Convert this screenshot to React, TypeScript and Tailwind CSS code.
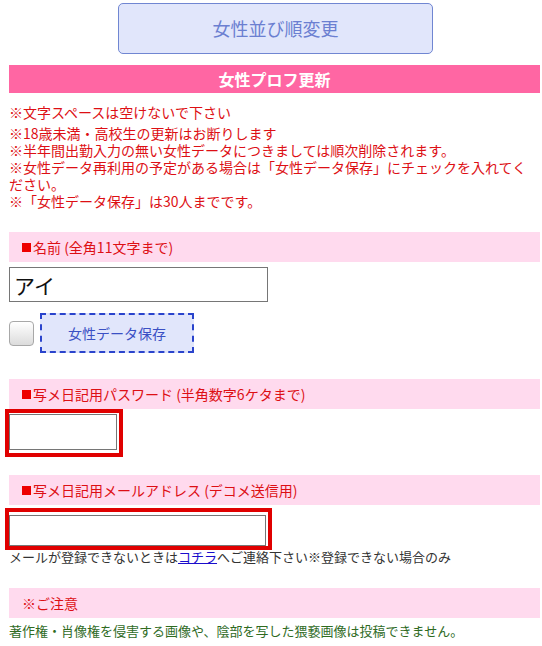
import { useState } from "react";

const jp = { fontFamily: '"Noto Sans CJK JP", "Liberation Sans", sans-serif' };

function SectionBar({ children, mark = true }: { children: React.ReactNode; mark?: boolean }) {
  return (
    <div className="flex h-[30px] items-center bg-[#ffdaee] pl-[13px] text-[14px] leading-none text-[#dd0f14]">
      {mark && <span className="mr-[2px] inline-block h-[9px] w-[9px] bg-[#ee0000]" />}
      {children}
    </div>
  );
}

export default function App() {
  const [name, setName] = useState("アイ");
  const [keep, setKeep] = useState(false);

  return (
    <div className="min-h-[646px] w-[542px] bg-white pb-[12px] pl-[9px] pr-[2px]" style={jp}>
      {/* sort order button */}
      <div className="flex justify-center pt-[3px] pl-[2px]">
        <button className="h-[51px] w-[315px] rounded-[5px] border border-[#7086d2] bg-[#e1e6fb] text-[18px] text-[#6b7fd1]">
          女性並び順変更
        </button>
      </div>

      {/* title */}
      <div className="mt-[11px] flex h-[28px] items-center justify-center bg-[#ff66a3] text-[16px] font-bold text-white">
        女性プロフ更新
      </div>

      {/* notes */}
      <p className="mt-[11px] text-[14px] leading-[17px] text-[#dd0f14]">※文字スペースは空けないで下さい</p>
      <div className="mt-[4px] text-[14px] leading-[17px] text-[#dd0f14]">
        <p>※18歳未満・高校生の更新はお断りします</p>
        <p>※半年間出勤入力の無い女性データにつきましては順次削除されます。</p>
        <p>※女性データ再利用の予定がある場合は「女性データ保存」にチェックを入れてください。</p>
        <p>※「女性データ保存」は30人までです。</p>
      </div>

      {/* name */}
      <div className="mt-[22px]">
        <SectionBar>名前 (全角11文字まで)</SectionBar>
      </div>
      <input
        value={name}
        onChange={(e) => setName(e.target.value)}
        className="mt-[5px] block h-[35px] w-[259px] border border-[#767676] px-[4px] text-[21px] text-[#111] outline-none"
        style={jp}
      />
      <div className="mt-[11px] flex items-center gap-[6px]">
        <button
          onClick={() => setKeep(!keep)}
          className="h-[25px] w-[25px] rounded-[4px] border border-[#a8a8a8] bg-gradient-to-b from-white to-[#dcdcdc]"
        >
          {keep && <span className="text-[14px] text-[#333]">✓</span>}
        </button>
        <div className="flex h-[40px] w-[154px] items-center justify-center border-2 border-dashed border-[#2a44cc] bg-[#e1e6fb] text-[14px] text-[#3b50c4]">
          女性データ保存
        </div>
      </div>

      {/* password */}
      <div className="mt-[26px]">
        <SectionBar>写メ日記用パスワード (半角数字6ケタまで)</SectionBar>
      </div>
      <div className="-ml-[4px] w-[118px] border-[4px] border-[#e00000] pt-[1px] pr-[2px] pb-[3px]">
        <input className="block h-[36px] w-[108px] border border-[#767676] outline-none" type="password" />
      </div>

      {/* mail */}
      <div className="mt-[18px]">
        <SectionBar>写メ日記用メールアドレス (デコメ送信用)</SectionBar>
      </div>
      <div className="-ml-[4px] mt-[3px] w-[267px] border-[4px] border-[#e00000] pt-[3px] pr-[1px]">
        <input className="block h-[31px] w-[257px] border border-[#767676] outline-none" />
      </div>
      <p className="-mt-[1px] text-[13px] leading-[15px] text-[#333]">
        メールが登録できないときは
        <a href="#" className="text-[#1a0dcc] underline">
          コチラ
        </a>
        へご連絡下さい※登録できない場合のみ
      </p>

      {/* caution */}
      <div className="mt-[24px]">
        <SectionBar mark={false}>※ご注意</SectionBar>
      </div>
      <p className="mt-[5px] text-[13px] leading-[16px] text-[#2f6b1f]">
        著作権・肖像権を侵害する画像や、陰部を写した猥褻画像は投稿できません。
      </p>
    </div>
  );
}
